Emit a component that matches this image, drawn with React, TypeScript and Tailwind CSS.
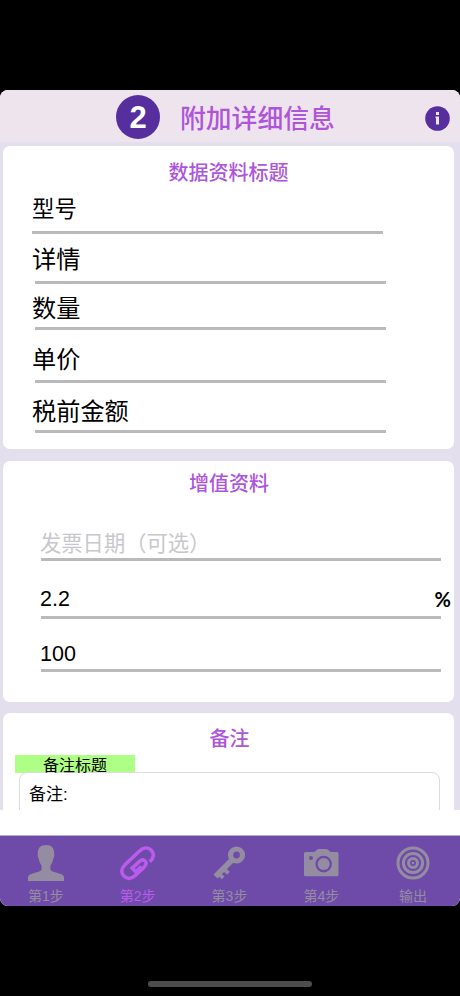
import React from 'react';
import clsx from 'clsx';

// --- Tab icons ---
const PersonIcon = () => (
    <svg className="w-[36px] h-[36px]" viewBox="0 0 36 36" fill="currentColor">
        <path d="M18 0c-5.600 0-8.400 3.200-8.200 8.500-.3 2.200.2 4 1 5.600.4 2.600 1.200 4.600 2.800 6.300v3.400c0 1.400-.9 2.300-2.400 2.800L2.500 29.200C.7 30 0 31 0 32.500V36h36v-3.500c0-1.500-.7-2.500-2.500-3.300l-8.700-2.600c-1.500-.5-2.400-1.400-2.400-2.800v-3.400c1.600-1.700 2.400-3.700 2.800-6.300.8-1.600 1.300-3.400 1-5.600C26.400 3.200 23.600 0 18 0z" />
    </svg>
);

const ClipIcon = () => (
    <svg className="w-[36px] h-[36px]" viewBox="0 0 36 36" fill="none" stroke="currentColor" strokeWidth="3.600">
        <path d="M29.800 16.800c4.200-3.900 4.600-8.400 1.500-11.600-3.300-3.300-8-2.800-11.800.8L5 19.800c-4 4-4 8.200-1.100 11.300 3 3.200 7.500 3 11.300-.6l8.900-8.400c2.500-2.500 2.500-4.700 1-6.200-1.600-1.600-3.700-1.300-5.600.5l-7.300 6.700 3.500 3.700 5.700-5.300" />
    </svg>
);

const KeyIcon = () => (
    <svg className="w-[36px] h-[36px]" viewBox="0 0 36 36" fill="none" stroke="currentColor">
        <circle cx="25.500" cy="10" r="6" strokeWidth="5.200" />
        <path d="M21 15L4.500 31.500" strokeWidth="5.600" />
        <path d="M12 23.500l5.500 4.800M7 28l5.200 4.800" strokeWidth="3.800" />
    </svg>
);

const CameraIcon = () => (
    <svg className="w-[36px] h-[36px]" viewBox="0 0 36 36" fill="currentColor">
        <path
            fillRule="evenodd"
            d="M2.500 7H11c1.500 0 2.500-3 5-3h7c2.500 0 3.500 3 5 3h6Q35.500 7 35.500 8.500V30q0 1.300-1.500 1.300H2.500Q1 31.300 1 30V8.500Q1 7 2.500 7zM8 11a2 2 0 1 0 0 4 2 2 0 0 0 0-4zm12.700-.2a8.300 8.300 0 1 0 0 16.600 8.300 8.300 0 0 0 0-16.600z"
        />
        <circle cx="20.700" cy="19.100" r="6" />
    </svg>
);

const TargetIcon = () => (
    <svg className="w-[36px] h-[36px]" viewBox="0 0 36 36" fill="none" stroke="currentColor" strokeWidth="3">
        <circle cx="18" cy="18" r="15" />
        <circle cx="18" cy="18" r="9.600" />
        <circle cx="18" cy="18" r="4.500" />
        <circle cx="18" cy="18" r="1.300" fill="currentColor" stroke="none" />
    </svg>
);

const TABS = [
    { label: '第1步', Icon: PersonIcon },
    { label: '第2步', Icon: ClipIcon },
    { label: '第3步', Icon: KeyIcon },
    { label: '第4步', Icon: CameraIcon },
    { label: '输出', Icon: TargetIcon },
];

// Row heights and line offsets differ slightly per field
const FIELDS = [
    { label: '型号', row: 'h-[50px] ml-0 text-[22.4px] leading-[52px]', text: 'ml-0' },
    { label: '详情', row: 'h-[50px] ml-[3px] text-[24.2px] leading-[52px]', text: '-ml-[3px]' },
    { label: '数量', row: 'h-[46px] ml-[3px] text-[24.2px] leading-[49px]', text: '-ml-[3px]' },
    { label: '单价', row: 'h-[53px] ml-[3px] text-[24.2px] leading-[60px]', text: '-ml-[3px]' },
    { label: '税前金额', row: 'h-[50px] ml-[3px] text-[24.2px] leading-[58px]', text: '-ml-[3px]' },
];

interface CardProps {
    title: string;
    className?: string;
    titleClassName?: string;
    children: React.ReactNode;
}

const Card: React.FC<CardProps> = ({ title, className, titleClassName = 'pt-[12px]', children }) => (
    <section className={clsx('ml-[3px] w-[451px] shrink-0 bg-white', className)}>
        <h2 className={clsx('h-[38px] text-center text-[20px] leading-[30px] font-medium text-[#ae55db]', titleClassName)}>
            {title}
        </h2>
        {children}
    </section>
);

const App: React.FC = () => {
    return (
        <div
            lang="zh-CN"
            className="flex h-[996px] w-[460px] flex-col overflow-hidden bg-black pt-[90px] font-['Liberation_Sans','Noto_Sans_CJK_SC',sans-serif] text-black"
        >
            <div className="flex h-[816px] shrink-0 flex-col overflow-hidden rounded-[8px] bg-white">
                {/* --- Header --- */}
                <header className="flex h-[52px] shrink-0 items-center bg-[#eee4ee] pl-[116px] pr-[10px]">
                    <div className="mt-[2px] flex h-[44px] w-[44px] items-center justify-center rounded-full bg-[#572e9d] text-[31px] font-bold leading-none text-white">
                        <span>2</span>
                    </div>
                    <h1 className="ml-[20px] mt-[5px] text-[25.8px] leading-[40px] font-medium text-[#ae55db]">
                        附加详细信息
                    </h1>
                    <svg className="ml-auto mt-[5px] h-[25px] w-[25px]" viewBox="0 0 25 25">
                        <circle cx="12.500" cy="12.500" r="12.300" fill="#572e9d" />
                        <rect x="11" y="6" width="3" height="3" fill="#eee4ee" />
                        <path d="M10.500 10.500H14v8h-3V12h-.5z" fill="#eee4ee" />
                    </svg>
                </header>

                {/* --- Form cards --- */}
                <main className="flex h-[668px] shrink-0 flex-col overflow-hidden bg-[#e4dfec] pt-[4px]">
                    <Card title="数据资料标题" className="h-[303px] rounded-[7px]">
                        <div className="ml-[29px] w-[351px]">
                            {FIELDS.map((field) => (
                                <div key={field.label} className={clsx('w-[351px] border-b-[3px] border-[#bababa]', field.row)}>
                                    <span className={field.text}>{field.label}</span>
                                </div>
                            ))}
                        </div>
                    </Card>

                    <Card title="增值资料" titleClassName="pt-[8px] pl-px" className="mt-[12px] h-[241px] rounded-[7px]">
                        <div className="ml-[38px] w-[400px] text-[21.5px]">
                            <div className="h-[62px] border-b-[3px] border-[#bababa] pt-[28px] font-['Noto_Sans_CJK_SC',sans-serif] text-[21.3px] leading-[30px] text-[#c8c8cc]">
                                <span className="-ml-px">发票日期（可选）</span>
                            </div>
                            <div className="flex h-[58px] justify-between border-b-[3px] border-[#bababa] pt-[23px] leading-[30px]">
                                <span className="-ml-px">2.2</span>
                                <span className="-mr-[10px] font-['Lato'] text-[20px] font-bold">%</span>
                            </div>
                            <div className="h-[53px] border-b-[3px] border-[#bababa] pt-[20px] leading-[30px]">
                                <span className="-ml-px">100</span>
                            </div>
                        </div>
                    </Card>

                    <Card title="备注" titleClassName="pt-[11px] pl-[2px]" className="mt-[11px] h-[120px] rounded-t-[7px]">
                        <div className="ml-[12px] mt-[4px] h-[18px] w-[120px] bg-[#aeff85] text-center text-[16px] leading-[21px]">
                            备注标题
                        </div>
                        <div className="-mt-px ml-[16px] h-[80px] w-[421px] rounded-[8px] border border-[#dcdcdc] pl-[9px] pt-[10px] text-[17px] leading-[24px]">
                            备注:
                        </div>
                    </Card>
                </main>

                <div className="h-[26px] shrink-0 border-b border-[#b9abc9] bg-white" />

                {/* --- Tab bar --- */}
                <nav className="grid h-[70px] shrink-0 grid-cols-5 bg-[#6f4ba9] pr-px">
                    {TABS.map(({ label, Icon }, index) => (
                        <div
                            key={label}
                            className={clsx(
                                'flex flex-col items-center pt-[9px] text-[14px] leading-[20px]',
                                index === 1 ? 'text-[#bb5beb]' : 'text-[#948ca0]'
                            )}
                        >
                            <Icon />
                            <span className="mt-[5px]">{label}</span>
                        </div>
                    ))}
                </nav>
            </div>

            {/* Home indicator */}
            <div className="mx-auto mt-[75px] h-[6px] w-[164px] shrink-0 rounded-full bg-[#4d4d4d]" />
        </div>
    );
};

export default App;
